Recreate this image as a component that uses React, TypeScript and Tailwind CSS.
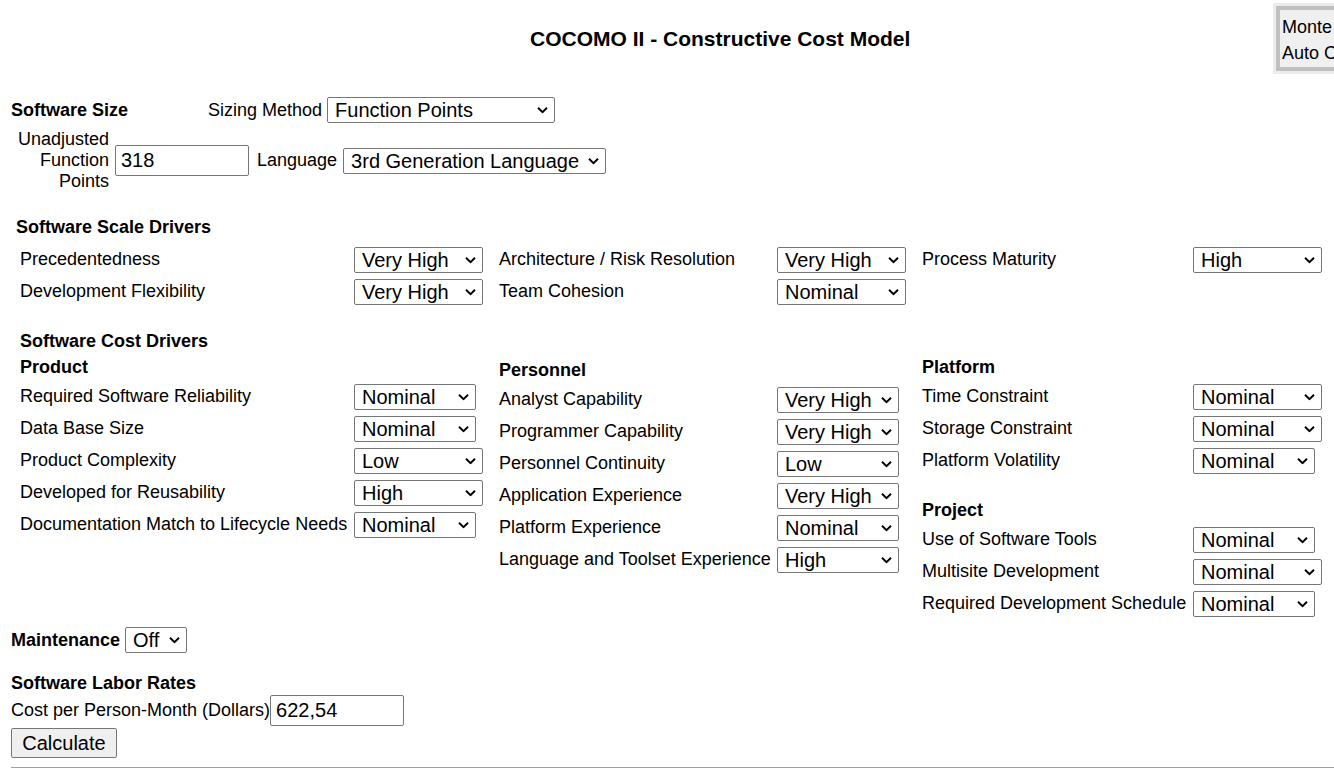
import React from 'react';

// COCOMO II estimation form
type Driver = { label: string; value: string; w: string };

const levels = ['Very Low', 'Low', 'Nominal', 'High', 'Very High', 'Extra High'];

const Chevron = () => (
  <svg
    className="pointer-events-none absolute right-[7px] top-1/2 -translate-y-1/2"
    width="11"
    height="7"
    viewBox="0 0 11 7"
    fill="none"
  >
    <path d="M1 1.2L5.5 5.6L10 1.2" stroke="#000" strokeWidth="1.9" />
  </svg>
);

const Select: React.FC<{ value: string; w: string; options?: string[] }> = ({ value, w, options }) => (
  <div className={`relative shrink-0 ${w}`}>
    <select
      defaultValue={value}
      className="block h-[26px] w-full appearance-none rounded-[2px] border border-[#767676] bg-white pl-[7px] pr-[20px] text-[20px] leading-[24px] text-black outline-none"
    >
      {(options || levels).map((o) => (
        <option key={o} value={o}>
          {o}
        </option>
      ))}
    </select>
    <Chevron />
  </div>
);

const Row: React.FC<{ d: Driver; labelW: string }> = ({ d, labelW }) => (
  <div className="flex h-[32px] items-center">
    <span className={`-mt-[1px] shrink-0 text-[18px] leading-[21px] ${labelW}`}>{d.label}</span>
    <Select value={d.value} w={d.w} />
  </div>
);

const Heading: React.FC<{ children: React.ReactNode; className?: string }> = ({ children, className }) => (
  <div className={`text-[18px] font-bold leading-[21px] ${className || ''}`}>{children}</div>
);

const scale: Driver[][] = [
  [
    { label: 'Precedentedness', value: 'Very High', w: 'w-[129px]' },
    { label: 'Development Flexibility', value: 'Very High', w: 'w-[129px]' },
  ],
  [
    { label: 'Architecture / Risk Resolution', value: 'Very High', w: 'w-[129px]' },
    { label: 'Team Cohesion', value: 'Nominal', w: 'w-[129px]' },
  ],
  [{ label: 'Process Maturity', value: 'High', w: 'w-[129px]' }],
];

const product: Driver[] = [
  { label: 'Required Software Reliability', value: 'Nominal', w: 'w-[122px]' },
  { label: 'Data Base Size', value: 'Nominal', w: 'w-[122px]' },
  { label: 'Product Complexity', value: 'Low', w: 'w-[129px]' },
  { label: 'Developed for Reusability', value: 'High', w: 'w-[129px]' },
  { label: 'Documentation Match to Lifecycle Needs', value: 'Nominal', w: 'w-[122px]' },
];

const personnel: Driver[] = [
  { label: 'Analyst Capability', value: 'Very High', w: 'w-[122px]' },
  { label: 'Programmer Capability', value: 'Very High', w: 'w-[122px]' },
  { label: 'Personnel Continuity', value: 'Low', w: 'w-[122px]' },
  { label: 'Application Experience', value: 'Very High', w: 'w-[122px]' },
  { label: 'Platform Experience', value: 'Nominal', w: 'w-[122px]' },
  { label: 'Language and Toolset Experience', value: 'High', w: 'w-[122px]' },
];

const platform: Driver[] = [
  { label: 'Time Constraint', value: 'Nominal', w: 'w-[129px]' },
  { label: 'Storage Constraint', value: 'Nominal', w: 'w-[129px]' },
  { label: 'Platform Volatility', value: 'Nominal', w: 'w-[122px]' },
];

const project: Driver[] = [
  { label: 'Use of Software Tools', value: 'Nominal', w: 'w-[122px]' },
  { label: 'Multisite Development', value: 'Nominal', w: 'w-[129px]' },
  { label: 'Required Development Schedule', value: 'Nominal', w: 'w-[122px]' },
];

const colLabel = ['w-[334px]', 'w-[278px]', 'w-[271px]'];

export default function App() {
  return (
    <div className="h-[768px] w-full overflow-hidden bg-white font-['Liberation_Sans',Arial,sans-serif] text-black">
      <header className="flex h-[80px] w-[1440px] items-start">
        <div className="w-[1273px] shrink-0 pl-[530px] pt-[26px]">
          <h1 className="text-[21px] font-bold leading-[26px]">COCOMO II - Constructive Cost Model</h1>
        </div>
        <div className="mt-[3px] shrink-0 border-[3px] border-[#ececec]">
          <div className="whitespace-nowrap border-[4px] border-[#c0c0c0] bg-[#f0f0f0] pb-[1px] pl-[2px] pr-[8px] pt-[4px] text-[18px] leading-[26px]">
            <div>Monte Carlo Risk</div>
            <div>Auto Calculate</div>
          </div>
        </div>
      </header>

      <main className="pl-[11px]">
        {/* Software size */}
        <div className="mt-[17px] flex h-[26px] items-center">
          <Heading className="w-[197px] shrink-0">Software Size</Heading>
          <span className="text-[18px] leading-[21px]">Sizing Method</span>
          <div className="ml-[5px]">
            <Select value="Function Points" w="w-[228px]" options={['Source Lines of Code', 'Function Points']} />
          </div>
        </div>
        <div className="mt-[6px] flex items-center">
          <div className="w-[98px] shrink-0 text-right text-[18px] leading-[21px]">
            Unadjusted
            <br />
            Function
            <br />
            Points
          </div>
          <input
            defaultValue="318"
            className="ml-[6px] h-[31px] w-[134px] rounded-[2px] border border-[#767676] px-[5px] text-[20px] outline-none"
          />
          <span className="ml-[8px] text-[18px] leading-[21px]">Language</span>
          <div className="ml-[6px]">
            <Select
              value="3rd Generation Language"
              w="w-[263px]"
              options={['3rd Generation Language', 'Java', 'C++', 'Visual Basic']}
            />
          </div>
        </div>

        {/* Scale drivers */}
        <Heading className="ml-[5px] mt-[25px]">Software Scale Drivers</Heading>
        <div className="mt-[6px] grid grid-cols-[479px_423px_1fr] pl-[9px]">
          {scale.map((col, i) => (
            <div key={i}>
              {col.map((d) => (
                <Row key={d.label} d={d} labelW={colLabel[i]} />
              ))}
            </div>
          ))}
        </div>

        {/* Cost drivers */}
        <Heading className="ml-[9px] mt-[23px]">Software Cost Drivers</Heading>
        <div className="mt-[5px] grid grid-cols-[479px_423px_1fr] pl-[9px]">
          <div>
            <Heading>Product</Heading>
            <div className="mt-[3px]">
              {product.map((d) => (
                <Row key={d.label} d={d} labelW={colLabel[0]} />
              ))}
            </div>
          </div>
          <div className="mt-[3px]">
            <Heading>Personnel</Heading>
            <div className="mt-[3px]">
              {personnel.map((d) => (
                <Row key={d.label} d={d} labelW={colLabel[1]} />
              ))}
            </div>
          </div>
          <div>
            <Heading>Platform</Heading>
            <div className="mt-[3px]">
              {platform.map((d) => (
                <Row key={d.label} d={d} labelW={colLabel[2]} />
              ))}
            </div>
            <Heading className="mt-[23px]">Project</Heading>
            <div className="mt-[3px]">
              {project.map((d) => (
                <Row key={d.label} d={d} labelW={colLabel[2]} />
              ))}
            </div>
          </div>
        </div>

        {/* Maintenance */}
        <div className="mt-[7px] flex h-[26px] items-center">
          <Heading>Maintenance</Heading>
          <div className="ml-[5px]">
            <Select value="Off" w="w-[62px]" options={['Off', 'On']} />
          </div>
        </div>

        {/* Labor rates */}
        <Heading className="mt-[20px]">Software Labor Rates</Heading>
        <div className="mt-[1px] flex items-center">
          <span className="text-[18px] leading-[21px]">Cost per Person-Month (Dollars)</span>
          <input
            defaultValue="622,54"
            className="h-[31px] w-[134px] rounded-[2px] border border-[#767676] px-[5px] text-[20px] outline-none"
          />
        </div>
        <button className="mt-[2px] h-[30px] w-[106px] rounded-[2px] border border-[#767676] bg-[#efefef] text-[20px] leading-[24px]">
          Calculate
        </button>
        <div className="mt-[9px] h-0 border-t border-[#a0a0a0]" />
      </main>
    </div>
  );
}
